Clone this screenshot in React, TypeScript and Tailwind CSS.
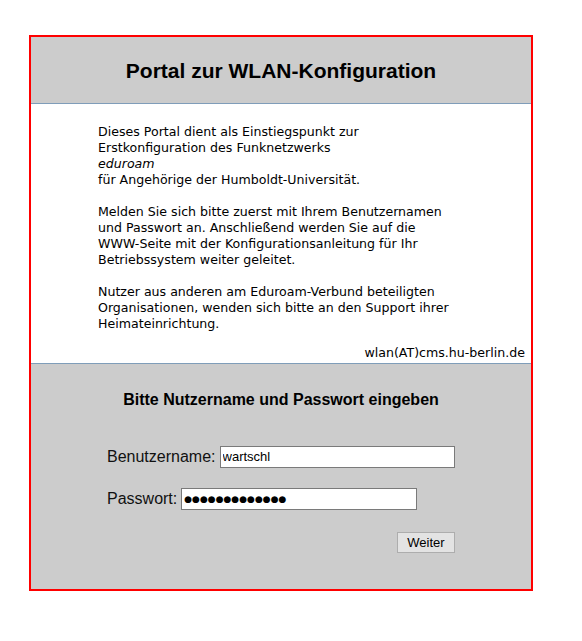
export default function App() {
  const body = "font-['DejaVu_Sans',sans-serif] text-[12.6px] leading-[16px] text-black";
  const arial = "font-['Liberation_Sans',Arial,sans-serif]";

  return (
    <div className="min-h-screen bg-white pt-[35px] pl-[29px]">
      <div className="w-[504px] border-2 border-[#ff0000] bg-[#cccccc]">
        <div className="h-[66px] pt-[2px] flex items-center justify-center">
          <h1 className={`${arial} text-[21px] font-bold text-black`}>
            Portal zur WLAN-Konfiguration
          </h1>
        </div>

        <div className="bg-white border-y border-[#7f9db9] pt-[20px] pb-[2px]">
          <div className={`${body} w-[366px] mx-auto`}>
            <p className="mb-4">
              Dieses Portal dient als Einstiegspunkt zur
              <br />
              Erstkonfiguration des Funknetzwerks
              <br />
              <i>eduroam</i>
              <br />
              für Angehörige der Humboldt-Universität.
            </p>
            <p className="mb-4">
              Melden Sie sich bitte zuerst mit Ihrem Benutzernamen
              <br />
              und Passwort an. Anschließend werden Sie auf die
              <br />
              WWW-Seite mit der Konfigurationsanleitung für Ihr
              <br />
              Betriebssystem weiter geleitet.
            </p>
            <p>
              Nutzer aus anderen am Eduroam-Verbund beteiligten
              <br />
              Organisationen, wenden sich bitte an den Support ihrer
              <br />
              Heimateinrichtung.
            </p>
          </div>
          <div className={`${body} text-right pr-[6px] mt-[13px]`}>wlan(AT)cms.hu-berlin.de</div>
        </div>

        <div className="pt-[26px] pb-[36px]">
          <h2 className={`${arial} text-center text-[16px] leading-[20px] font-bold text-black`}>
            Bitte Nutzername und Passwort eingeben
          </h2>
          <div className={`${arial} w-[348px] mx-auto mt-[36px] flex flex-col`}>
            <label className="flex items-center h-[22px] gap-[4px] text-[16px] leading-[22px] text-[#111]">
              Benutzername:
              <input
                readOnly
                value="wartschl"
                className={`${arial} w-[236px] h-[22px] bg-white border border-[#7a7a7a] px-[2px] text-[13px] text-black outline-none`}
              />
            </label>
            <label className="flex items-center h-[22px] gap-[4px] mt-[20px] text-[16px] leading-[22px] text-[#111]">
              Passwort:
              <input
                readOnly
                value="●●●●●●●●●●●●●"
                className="font-['DejaVu_Sans',sans-serif] w-[236px] h-[22px] bg-white border border-[#7a7a7a] px-[2px] text-[9px] text-black outline-none"
              />
            </label>
            <div className="flex justify-end mt-[22px]">
              <button className={`${arial} w-[58px] h-[21px] bg-[#e3e3e3] border border-[#adadad] text-[13px] text-black`}>
                Weiter
              </button>
            </div>
          </div>
        </div>
      </div>
    </div>
  );
}
